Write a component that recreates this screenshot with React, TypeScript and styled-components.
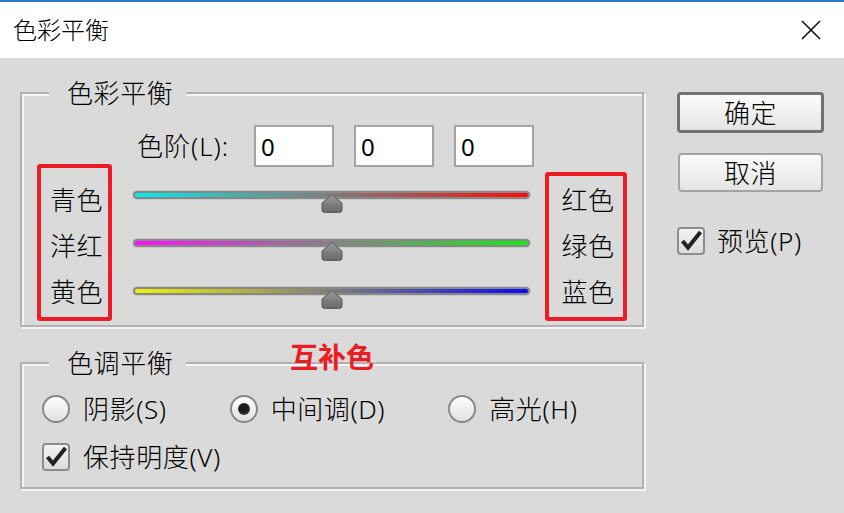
import React from 'react';
import styled, { createGlobalStyle } from 'styled-components';

const FONT = `"Noto Sans", "Noto Sans CJK SC", sans-serif`;

const GlobalStyle = createGlobalStyle`
  html, body {
    margin: 0;
    padding: 0;
    background: #dadada;
  }
  body {
    font-family: ${FONT};
    font-weight: 300;
    color: #000;
  }
`;

function Thumb() {
  return (
    <ThumbSvg width="22" height="20" viewBox="0 0 22 20">
      <defs>
        <linearGradient id="thumbFill" x1="0" y1="0" x2="0" y2="1">
          <stop offset="0" stopColor="#9a9a9a" />
          <stop offset="1" stopColor="#676767" />
        </linearGradient>
      </defs>
      <path
        d="M1 10 L11 1.5 L21 10 V17 Q21 19.5 18.5 19.5 H3.5 Q1 19.5 1 17 Z"
        fill="url(#thumbFill)"
        stroke="#5e5e5e"
        strokeWidth="1"
      />
    </ThumbSvg>
  );
}

function Slider({ from, to, value = 50 }: { from: string; to: string; value?: number }) {
  return (
    <SliderRow>
      <Track $from={from} $to={to}>
        <ThumbHolder style={{ left: `calc(${value}% - 11px)` }}>
          <Thumb />
        </ThumbHolder>
      </Track>
    </SliderRow>
  );
}

function Check() {
  return (
    <CheckBox>
      <svg width="24" height="24" viewBox="0 0 24 24">
        <polyline
          points="3.5,12 9,18.5 21.5,3"
          fill="none"
          stroke="#222"
          strokeWidth="4"
          strokeLinejoin="miter"
        />
      </svg>
    </CheckBox>
  );
}

function App() {
  return (
    <Window>
      <GlobalStyle />
      <TitleBar>
        <span>色彩平衡</span>
        <svg width="20" height="20" viewBox="0 0 20 20">
          <path d="M1 1 L19 19 M19 1 L1 19" stroke="#111" strokeWidth="1.6" />
        </svg>
      </TitleBar>

      <Body>
        <LeftColumn>
          <Group $padTop={17} $padSide={15} $padBottom={4}>
            <Legend $offset={12}>色彩平衡</Legend>
            <BalanceGrid>
              <LevelsRow>
                <LevelsLabel>色阶(L):</LevelsLabel>
                <LevelInput defaultValue="0" />
                <LevelInput defaultValue="0" />
                <LevelInput defaultValue="0" />
              </LevelsRow>

              <LeftBox>
                <ColorLabel>青色</ColorLabel>
                <ColorLabel>洋红</ColorLabel>
                <ColorLabel>黄色</ColorLabel>
              </LeftBox>

              <SliderColumn>
                <Slider from="#00ecec" to="#ff0a0a" />
                <Slider from="#ff10ff" to="#10f010" />
                <Slider from="#f2f200" to="#0a0af5" />
              </SliderColumn>

              <RightBox>
                <ColorLabel>红色</ColorLabel>
                <ColorLabel>绿色</ColorLabel>
                <ColorLabel>蓝色</ColorLabel>
              </RightBox>
            </BalanceGrid>
          </Group>

          <Group $padTop={17} $padSide={20} $padBottom={16}>
            <Legend $offset={7}>色调平衡</Legend>
            <RadioRow>
              <Option>
                <Radio />
                <span>阴影(S)</span>
              </Option>
              <Option>
                <Radio $checked />
                <span>中间调(D)</span>
              </Option>
              <Option>
                <Radio />
                <span>高光(H)</span>
              </Option>
            </RadioRow>
            <CheckRow>
              <Check />
              <span>保持明度(V)</span>
            </CheckRow>
          </Group>

          <Annotation>互补色</Annotation>
        </LeftColumn>

        <RightColumn>
          <Button $primary>确定</Button>
          <Button>取消</Button>
          <PreviewRow>
            <Check />
            <span>预览(P)</span>
          </PreviewRow>
        </RightColumn>
      </Body>
    </Window>
  );
}

const Window = styled.div`
  width: 844px;
  height: 513px;
  display: flex;
  flex-direction: column;
  background: #dadada;
  overflow: hidden;
`;

const TitleBar = styled.div`
  height: 56px;
  border-top: 2px solid #2b78c4;
  background: #fff;
  display: flex;
  align-items: center;
  justify-content: space-between;
  padding: 0 23px 0 13px;
  font-size: 24px;
  line-height: 30px;
`;

const Body = styled.div`
  display: flex;
  gap: 33px;
  padding: 20px 20px 0 20px;
`;

const LeftColumn = styled.div`
  position: relative;
  width: 624px;
  display: flex;
  flex-direction: column;
  gap: 21px;
`;

const Group = styled.fieldset<{ $padTop: number; $padSide: number; $padBottom: number }>`
  margin: 0;
  min-width: 0;
  padding: ${(p) => `${p.$padTop}px ${p.$padSide}px ${p.$padBottom}px`};
  border: 2px solid #b2b2b2;
  box-shadow: inset 2px 2px 0 #f4f4f4, 2px 2px 0 #f4f4f4;
  font-size: 26px;
  letter-spacing: 0.6px;
`;

const Legend = styled.legend<{ $offset: number }>`
  margin-left: ${(p) => p.$offset}px;
  padding: 0 13px 0 18px;
  font-size: 26px;
  line-height: 30px;
  background: #dadada;
`;

const BalanceGrid = styled.div`
  display: grid;
  grid-template-columns: 75px 433px 82px;
  grid-template-rows: 42px auto;
`;

const LevelsRow = styled.div`
  grid-column: 2 / 4;
  grid-row: 1;
  display: grid;
  grid-template-columns: 97px 80px 80px 80px;
  column-gap: 20px;
  align-items: center;
  padding-left: 25px;
`;

const LevelsLabel = styled.span`
  font-size: 26px;
  line-height: 30px;
  white-space: nowrap;
  letter-spacing: 1px;
`;

const LevelInput = styled.input`
  width: 80px;
  height: 42px;
  box-sizing: border-box;
  border: 2px solid #a4a4a4;
  background: #fff;
  font-family: ${FONT};
  font-weight: 400;
  font-size: 24px;
  padding: 0 5px;
  color: #000;
  outline: none;
`;

const LabelBox = styled.div`
  box-sizing: border-box;
  border: 4px solid #ec1c24;
  border-radius: 3px;
  display: flex;
  flex-direction: column;
  align-items: center;
  padding-left: 4px;
`;

const LeftBox = styled(LabelBox)`
  grid-column: 1;
  grid-row: 1 / 3;
  align-self: end;
  height: 157px;
  padding-top: 9px;
`;

const RightBox = styled(LabelBox)`
  grid-column: 3;
  grid-row: 2;
  margin-top: 5px;
  height: 149px;
  padding-top: 1px;
`;

const ColorLabel = styled.div`
  font-size: 26px;
  line-height: 46px;
  height: 46px;
`;

const SliderColumn = styled.div`
  grid-column: 2;
  grid-row: 2;
  padding: 4px 15px 0 21px;
  display: flex;
  flex-direction: column;
`;

const SliderRow = styled.div`
  height: 48px;
  display: flex;
  align-items: center;
`;

const Track = styled.div<{ $from: string; $to: string }>`
  position: relative;
  flex: 1;
  height: 4px;
  border: 2px solid #888;
  border-radius: 5px;
  background: linear-gradient(to right, ${(p) => p.$from}, ${(p) => p.$to});
  box-shadow: 0 0 0 1px #c9c9c9;
`;

const ThumbHolder = styled.div`
  position: absolute;
  top: 0;
  width: 22px;
  height: 20px;
`;

const ThumbSvg = styled.svg`
  display: block;
`;

const RadioRow = styled.div`
  display: flex;
  gap: 63px;
  height: 28px;
  align-items: center;
`;

const Option = styled.label`
  display: flex;
  align-items: center;
  gap: 13px;
  font-size: 26px;
  line-height: 30px;
`;

const Radio = styled.span<{ $checked?: boolean }>`
  width: 28px;
  height: 28px;
  box-sizing: border-box;
  border-radius: 50%;
  border: 2px solid #8a8a8a;
  background: linear-gradient(#fdfdfd, #e2e2e2);
  display: inline-flex;
  align-items: center;
  justify-content: center;

  &::after {
    content: '';
    width: 12px;
    height: 12px;
    border-radius: 50%;
    background: radial-gradient(circle at 45% 40%, #1a1a1a 40%, #5a5a5a);
    display: ${(p) => (p.$checked ? 'block' : 'none')};
  }
`;

const CheckRow = styled.label`
  display: flex;
  align-items: center;
  gap: 13px;
  margin-top: 20px;
  height: 28px;
  font-size: 26px;
  line-height: 30px;
`;

const CheckBox = styled.span`
  flex: none;
  width: 28px;
  height: 28px;
  box-sizing: border-box;
  border: 2px solid #8c8c8c;
  border-radius: 4px;
  background: linear-gradient(#f3f3f3, #dcdcdc);
  display: inline-flex;
  align-items: center;
  justify-content: center;
`;

const Annotation = styled.div`
  position: absolute;
  left: 270px;
  top: 263px;
  font-family: "Noto Sans CJK SC", sans-serif;
  font-weight: 700;
  font-size: 28px;
  line-height: 30px;
  letter-spacing: 0;
  color: #ec1c24;
`;

const RightColumn = styled.div`
  width: 147px;
  display: flex;
  flex-direction: column;
  align-items: stretch;
  padding-top: 14px;
`;

const Button = styled.button<{ $primary?: boolean }>`
  box-sizing: border-box;
  height: ${(p) => (p.$primary ? '41px' : '39px')};
  margin: ${(p) => (p.$primary ? '0' : '20px 1px 0')};
  border: ${(p) => (p.$primary ? '3px solid #717171' : '2px solid #a3a3a3')};
  border-radius: 4px;
  background: linear-gradient(#fcfcfc, #e4e4e4);
  font-family: ${FONT};
  font-weight: 300;
  font-size: 26px;
  line-height: 30px;
  letter-spacing: 0.6px;
  color: #000;
  padding: 0;
`;

const PreviewRow = styled.label`
  display: flex;
  align-items: center;
  gap: 12px;
  margin-top: 35px;
  height: 28px;
  font-size: 26px;
  line-height: 30px;
  letter-spacing: 0.6px;
`;

export default App;
